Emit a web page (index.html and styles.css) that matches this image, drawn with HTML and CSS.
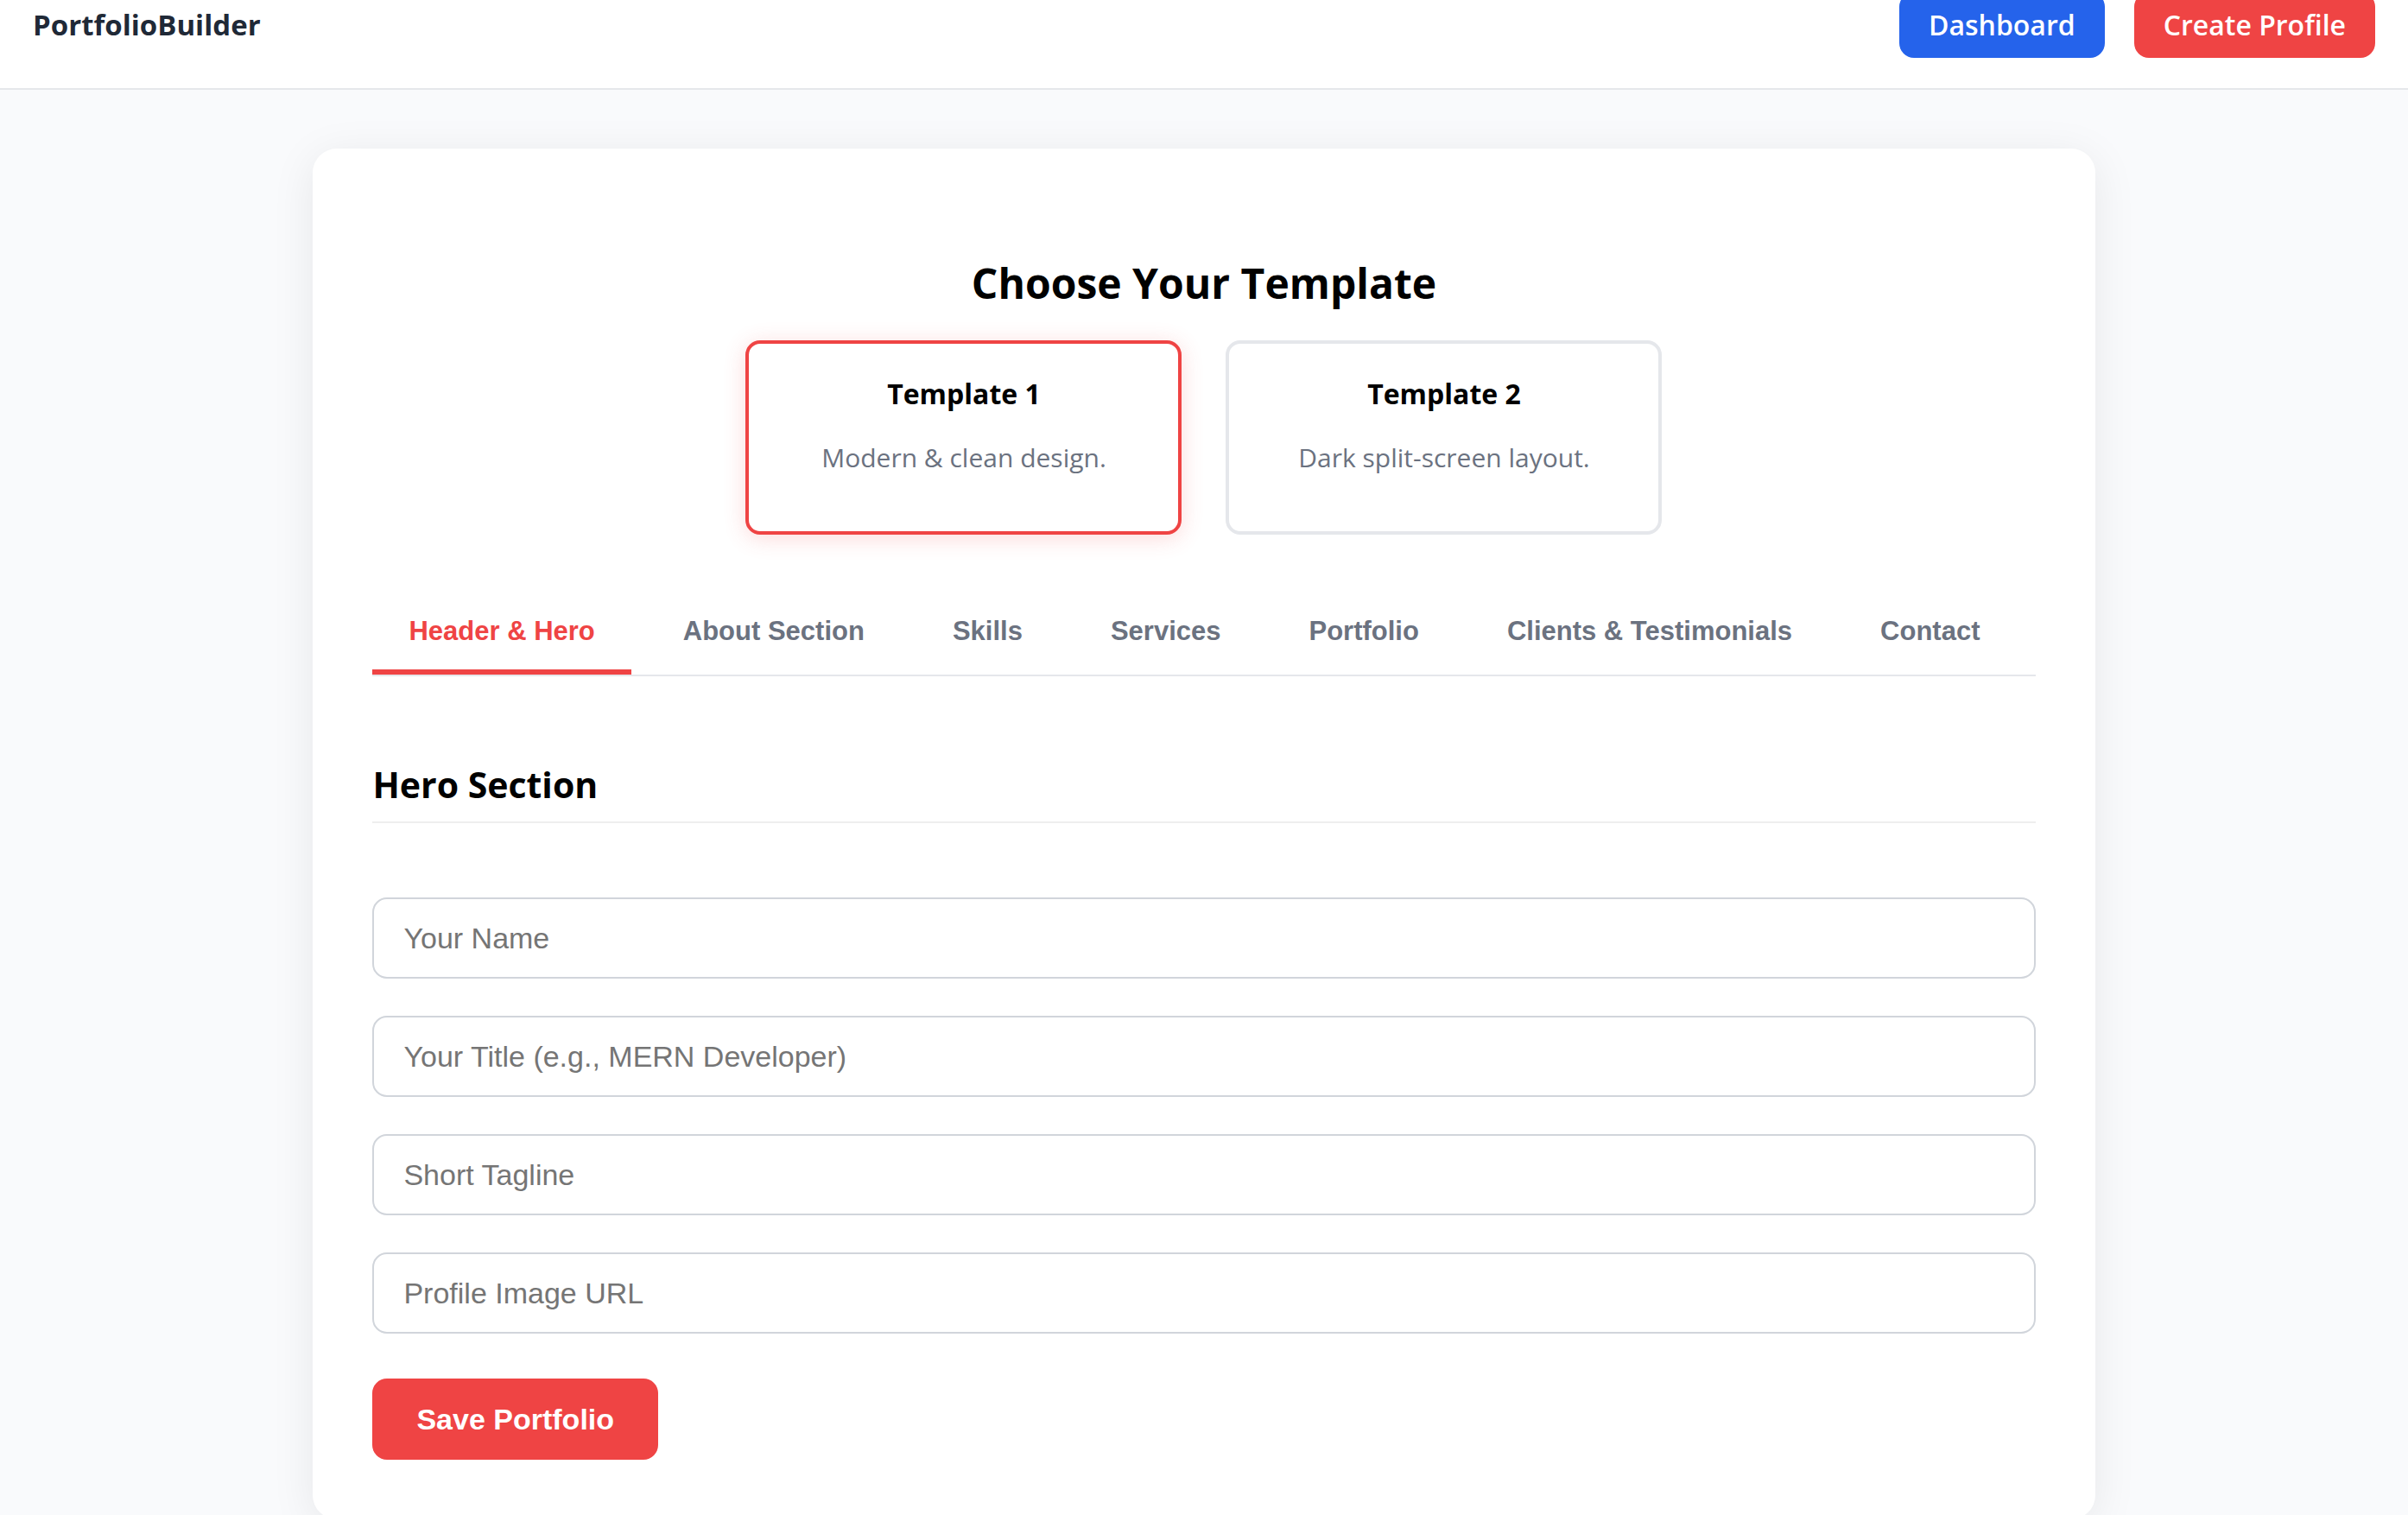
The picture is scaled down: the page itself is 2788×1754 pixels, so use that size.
FILE: index.html
```html
<!DOCTYPE html>
<html lang="en">
<head>
<meta charset="utf-8">
<meta name="viewport" content="width=device-width, initial-scale=1">
<title>PortfolioBuilder</title>
<link rel="stylesheet" href="styles.css">
</head>
<body>
<header class="navbar">
  <a class="logo" href="#">PortfolioBuilder</a>
  <nav class="nav-links">
    <a class="nav-btn nav-btn-blue" href="#">Dashboard</a>
    <a class="nav-btn nav-btn-red" href="#">Create Profile</a>
  </nav>
</header>
<main class="panel">
  <section class="templates">
    <h1 class="templates-title">Choose Your Template</h1>
    <div class="template-list">
      <button class="template selected" type="button" aria-pressed="true">
        <span class="template-name">Template 1</span>
        <span class="template-text">Modern &amp; clean design.</span>
      </button>
      <button class="template" type="button" aria-pressed="false">
        <span class="template-name">Template 2</span>
        <span class="template-text">Dark split-screen layout.</span>
      </button>
    </div>
  </section>
  <div class="tabs" role="tablist">
    <button class="tab active" type="button" role="tab" aria-selected="true">Header &amp; Hero</button>
    <button class="tab" type="button" role="tab">About Section</button>
    <button class="tab" type="button" role="tab">Skills</button>
    <button class="tab" type="button" role="tab">Services</button>
    <button class="tab" type="button" role="tab">Portfolio</button>
    <button class="tab" type="button" role="tab">Clients &amp; Testimonials</button>
    <button class="tab" type="button" role="tab">Contact</button>
  </div>
  <form class="form">
    <h2 class="section-title">Hero Section</h2>
    <div class="fields">
      <input class="field" type="text" name="name" placeholder="Your Name" aria-label="Your Name">
      <input class="field" type="text" name="title" placeholder="Your Title (e.g., MERN Developer)" aria-label="Your Title">
      <input class="field" type="text" name="tagline" placeholder="Short Tagline" aria-label="Short Tagline">
      <input class="field" type="text" name="image" placeholder="Profile Image URL" aria-label="Profile Image URL">
    </div>
    <button class="save" type="submit">Save Portfolio</button>
  </form>
</main>
</body>
</html>
```
FILE: styles.css
```css
* {
  box-sizing: border-box;
}

body {
  margin: 0;
  background: #f9fafc;
  color: #000;
  font-family: "Segoe UI", "Open Sans", "Noto Sans", sans-serif;
}

/* The bar is tucked partly under the top edge of the window */
.navbar {
  display: flex;
  align-items: center;
  justify-content: space-between;
  margin-top: -43px;
  padding: 34px 38px 35px;
  background: #fff;
  border-bottom: 2px solid #e5e7eb;
}

.logo {
  color: #1f2937;
  font-size: 33px;
  font-weight: 700;
  line-height: 44px;
  text-decoration: none;
}

.nav-links {
  display: flex;
  gap: 34px;
}

.nav-btn {
  padding: 16px 34px;
  border-radius: 17px;
  color: #fff;
  font-size: 32px;
  font-weight: 600;
  line-height: 44px;
  text-decoration: none;
}

.nav-btn-blue {
  background: #2563eb;
}

.nav-btn-red {
  background: #ef4444;
}

.panel {
  width: 74%;
  margin: 68px auto;
  padding: 118px 69px 69px;
  background: #fff;
  border-radius: 28px;
  box-shadow: 0 9px 51px rgba(0, 0, 0, 0.08);
}

.templates-title {
  margin: 0 0 28px;
  font-size: 48px;
  font-weight: 700;
  line-height: 76px;
  text-align: center;
}

.template-list {
  display: flex;
  justify-content: center;
  gap: 51px;
}

.template {
  display: flex;
  flex-direction: column;
  align-items: center;
  gap: 26px;
  width: 505px;
  padding: 34px 34px 61px;
  background: #fff;
  border: 4px solid #e5e7eb;
  border-radius: 17px;
  font-family: inherit;
}

.template.selected {
  border-color: #ef4444;
  box-shadow: 0 4px 26px rgba(239, 68, 68, 0.2);
}

.template-name {
  color: #000;
  font-size: 32px;
  font-weight: 700;
  line-height: 48px;
}

.template-text {
  color: #6b7280;
  font-size: 30px;
  line-height: 48px;
}

.tabs {
  display: flex;
  gap: 18px;
  margin-top: 77px;
  border-bottom: 2px solid #e5e7eb;
}

.tab {
  padding: 17px 42px 26px;
  background: none;
  border: 0;
  border-bottom: 6px solid transparent;
  color: #6b7280;
  font: 700 31px/36px "Liberation Sans", Arial, sans-serif;
}

.tab.active {
  color: #ef4444;
  border-bottom-color: #ef4444;
}

.section-title {
  margin: 95px 0 86px;
  padding-bottom: 13px;
  border-bottom: 2px solid #eee;
  font-size: 41px;
  font-weight: 700;
  line-height: 60px;
}

.fields {
  display: flex;
  flex-direction: column;
  gap: 43px;
}

.field {
  width: 100%;
  height: 94px;
  padding: 0 34px;
  background: #fff;
  border: 2px solid #d1d5db;
  border-radius: 17px;
  font: 34px "Liberation Sans", Arial, sans-serif;
}

.field::placeholder {
  color: #757575;
}

.save {
  height: 94px;
  margin-top: 52px;
  padding: 0 51px;
  background: #ef4444;
  border: 0;
  border-radius: 17px;
  color: #fff;
  font: 700 34px "Liberation Sans", Arial, sans-serif;
}
```
